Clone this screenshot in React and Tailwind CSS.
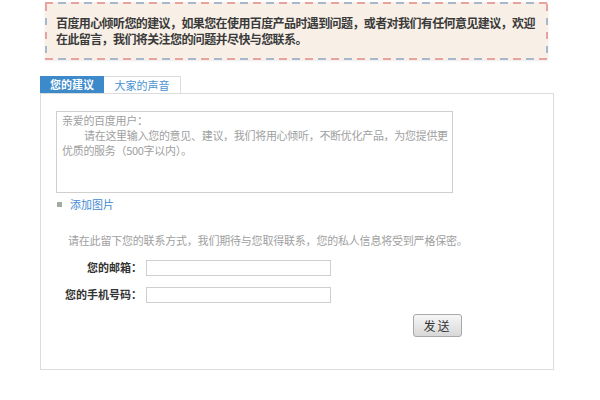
import React from "react";

const font = "font-['Noto_Sans_CJK_SC','Noto_Sans',sans-serif]";

const hDash =
  "bg-[repeating-linear-gradient(90deg,#e7a3a0_0_8px,transparent_8px_13px,#a9b7cc_13px_21px,transparent_21px_26px)]";
const vDash =
  "bg-[repeating-linear-gradient(180deg,#e7a3a0_0_7px,transparent_7px_14px,#a9b7cc_14px_21px,transparent_21px_28px)]";

const FeedbackPage = () => {
  return (
    <div className={`w-[600px] h-[400px] bg-white overflow-hidden ${font}`}>
      {/* airmail notice */}
      <div className="ml-[45px] mt-[2px] w-[503px] h-[58px] flex flex-col bg-[#f8f0e7] shadow-[0_1px_2px_rgba(0,0,0,0.08)]">
        <div className={`h-[2px] ${hDash}`}></div>
        <div className="flex flex-1">
          <div className={`w-[2px] ${vDash}`}></div>
          <div className="flex-1 pl-[9px] pr-[4px] pt-[11px] text-[12px] leading-[16px] tracking-[-0.6px] font-bold text-[#3a3a3a]">
            百度用心倾听您的建议，如果您在使用百度产品时遇到问题，或者对我们有任何意见建议，欢迎在此留言，我们将关注您的问题并尽快与您联系。
          </div>
          <div className={`w-[2px] ${vDash}`}></div>
        </div>
        <div className={`h-[2px] ${hDash}`}></div>
      </div>

      {/* tabs */}
      <div className="ml-[40px] mt-[16px] flex h-[17px]">
        <div className="w-[64px] bg-[#3d8acb] text-white text-[11px] font-bold leading-[17px] text-center">
          您的建议
        </div>
        <div className="w-[77px] border-t border-r border-[#dcdcdc] text-[#4a92d2] text-[11px] leading-[16px] text-center">
          大家的声音
        </div>
      </div>

      {/* panel */}
      <div className="ml-[40px] w-[514px] h-[277px] border border-[#dcdcdc] pl-[15px] pt-[17px]">
        <div className="w-[397px] h-[82px] border border-[#cfcfcf] px-[5px] pt-[1px] text-[11px] leading-[15px] tracking-[-0.3px] text-[#a0a0a0] whitespace-nowrap">
          <div>亲爱的百度用户：</div>
          <div className="pl-[22px]">
            请在这里输入您的意见、建议，我们将用心倾听，不断优化产品，为您提供更
          </div>
          <div>优质的服务（500字以内）。</div>
        </div>

        <div className="mt-[4px] flex items-center h-[15px]">
          <span className="ml-[1px] w-[5px] h-[5px] bg-[#a3aaa0]"></span>
          <span className="ml-[8px] text-[11px] text-[#3f8ad0]">添加图片</span>
        </div>

        <div className="mt-[21px] ml-[12px] text-[11px] leading-[15px] tracking-[-0.2px] text-[#a0a0a0]">
          请在此留下您的联系方式，我们期待与您取得联系，您的私人信息将受到严格保密。
        </div>

        <div className="mt-[11px] flex items-center h-[17px]">
          <div className="w-[86px] text-right text-[11px] font-bold text-[#333]">您的邮箱：</div>
          <div className="ml-[4px] w-[185px] h-[16px] border border-[#cfcfcf]"></div>
        </div>
        <div className="mt-[10px] flex items-center h-[17px]">
          <div className="w-[86px] text-right text-[11px] font-bold text-[#333]">您的手机号码：</div>
          <div className="ml-[4px] w-[185px] h-[16px] border border-[#cfcfcf]"></div>
        </div>

        <div className="mt-[11px] ml-[357px] w-[49px] h-[23px] rounded-[3px] border border-[#a8a8a8] bg-gradient-to-b from-[#f7f7f7] to-[#d8d8d8] text-[12px] leading-[21px] text-center text-[#333] tracking-[2px]">
          发送
        </div>
      </div>
    </div>
  );
};

export default FeedbackPage;
